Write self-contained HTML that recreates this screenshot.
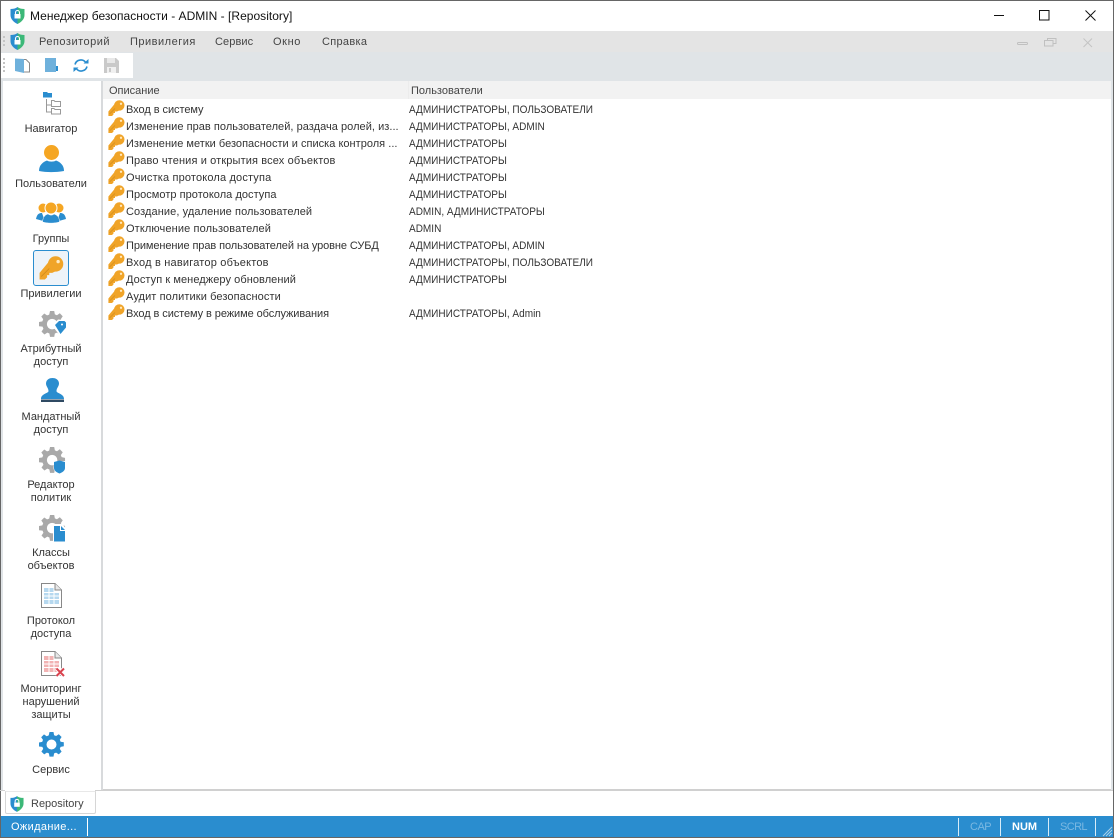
<!DOCTYPE html>
<html><head><meta charset="utf-8"><style>
html,body{margin:0;padding:0;width:1114px;height:838px;overflow:hidden;background:#fff}
body{font-family:"Liberation Sans",sans-serif;font-size:11px;color:#333;position:relative}
.a{position:absolute;white-space:nowrap}
.m{top:36px;color:#444;line-height:13px;letter-spacing:.5px}
.n{left:3px;width:96px;text-align:center;line-height:13px;color:#333;white-space:normal}
.r{left:126px;line-height:14px;color:#333;width:275px;overflow:hidden}
.u{left:409px;line-height:14px;color:#333;transform:scaleX(.912);transform-origin:0 0}
.k{position:absolute;left:108px;width:17px;height:17px}
svg{position:absolute;overflow:visible}
</style></head><body>
<svg width="0" height="0" style="position:absolute"><defs>
<g id="key"><path d="M7 3.500L.4 11.500V16H4L5.500 14.500V13H7V11.500H9L12 10Z" fill="#f0a428"/><circle cx="11.300" cy="5.400" r="5.200" fill="#f0a428"/><circle cx="13" cy="3.800" r="1.150" fill="#ffe9c0"/><path d="M1.500 14L7 8.500" stroke="#d08c1c" stroke-width=".6"/></g>
<path id="gear" d="M10.500 0h4l.6 3.200 2 .8 2.700-1.800 2.800 2.800-1.800 2.700.8 2 3.200.6v4l-3.200.6-.8 2 1.800 2.700-2.800 2.800-2.700-1.800-2 .8-.6 3.200h-4l-.6-3.200-2-.8-2.700 1.800-2.800-2.800 1.800-2.700-.8-2L0 14.500v-4l3.200-.6.8-2L2.200 5.200 5 2.400l2.700 1.800 2-.8zM12.500 7.500a5 5 0 1 0 0 10 5 5 0 0 0 0-10z" fill-rule="evenodd"/>
</defs></svg>

<div class="a" style="left:0;top:0;width:1114px;height:1px;background:#666"></div>
<div class="a" style="left:0;top:0;width:1px;height:838px;background:#666"></div>
<div class="a" style="left:1113px;top:0;width:1px;height:838px;background:#666"></div>

<svg style="left:10px;top:7px" width="15" height="17" viewBox="0 0 15 17"><path d="M7.500 0C5.500 1.500 3 2 .5 2V8C.5 12 3.500 15 7.500 17Z" fill="#2a8dcf"/><path d="M7.500 0C9.500 1.500 12 2 14.500 2V8C14.500 12 11.500 15 7.500 17Z" fill="#3cb878"/><rect x="4.500" y="7" width="6" height="4.500" fill="#fff"/><path d="M5.500 7V5.500a2 2 0 0 1 4 0V7" fill="none" stroke="#fff" stroke-width="1.100"/></svg>
<div class="a" style="left:30px;top:9px;font-size:12px;line-height:15px;color:#111;letter-spacing:.02px">Менеджер безопасности - ADMIN - [Repository]</div>
<svg style="left:994px;top:15px" width="11" height="1"><rect width="10" height="1" fill="#111"/></svg>
<svg style="left:1039px;top:10px" width="11" height="11"><rect x=".5" y=".5" width="9.500" height="9.500" fill="none" stroke="#111"/></svg>
<svg style="left:1085px;top:10px" width="11" height="11"><path d="M.5 .5L10.500 10.500M10.500 .5L.5 10.500" stroke="#111"/></svg>

<div class="a" style="left:1px;top:31px;width:1112px;height:21px;background:#e4e4e4"></div>
<div class="a" style="left:1px;top:52px;width:1112px;height:29px;background:#e0e4e7"></div>
<div class="a" style="left:3px;top:36px;width:2px;height:11px;background:repeating-linear-gradient(#c4c4c4 0 2px,transparent 2px 4px)"></div>
<svg style="left:10px;top:33px" width="15" height="17" viewBox="0 0 15 17"><path d="M7.500 0C5.500 1.500 3 2 .5 2V8C.5 12 3.500 15 7.500 17Z" fill="#2a8dcf"/><path d="M7.500 0C9.500 1.500 12 2 14.500 2V8C14.500 12 11.500 15 7.500 17Z" fill="#3cb878"/><rect x="4.500" y="7" width="6" height="4.500" fill="#fff"/><path d="M5.500 7V5.500a2 2 0 0 1 4 0V7" fill="none" stroke="#fff" stroke-width="1.100"/></svg>
<div class="a m" style="left:39px">Репозиторий</div>
<div class="a m" style="left:130px">Привилегия</div>
<div class="a m" style="left:215px;letter-spacing:.1px">Сервис</div>
<div class="a m" style="left:273px;letter-spacing:.6px">Окно</div>
<div class="a m" style="left:322px;letter-spacing:.3px">Справка</div>
<svg style="left:1017px;top:41px" width="12" height="5"><rect x=".5" y="1.500" width="10" height="2" rx="1" fill="none" stroke="#c0c0c0"/></svg>
<svg style="left:1044px;top:38px" width="13" height="9"><path d="M3.500 2.500V.5H12V5.500H9M.5 2.500H9V8H.5Z" fill="none" stroke="#c0c0c0"/></svg>
<svg style="left:1083px;top:38px" width="10" height="10"><path d="M.5 .5L9 9M9 .5L.5 9" stroke="#c4c4c4"/></svg>

<div class="a" style="left:1px;top:53px;width:132px;height:25px;background:#fff"></div>
<div class="a" style="left:3px;top:58px;width:2px;height:14px;background:repeating-linear-gradient(#c4c4c4 0 2px,transparent 2px 4px)"></div>
<svg style="left:15px;top:58px" width="15" height="15"><path d="M7 1.500H11L14.500 5V14H7Z" fill="#fff" stroke="#888"/><path d="M0 .5L9 1V15L0 13Z" fill="#6fb1dc"/></svg>
<svg style="left:45px;top:58px" width="13" height="14"><rect width="11" height="14" fill="#6fb1dc"/><path d="M11 8H13V13H11Z" fill="#2a8dcf"/></svg>
<svg style="left:73px;top:58px" width="16" height="15" viewBox="0 0 16 15"><path d="M2 6.500A6 6 0 0 1 13 5M14 8.500A6 6 0 0 1 3 10" fill="none" stroke="#2a8dcf" stroke-width="1.600"/><path d="M10.500 5.500H15.500V1ZM5.500 9.500H.5V14Z" fill="#2a8dcf"/></svg>
<svg style="left:104px;top:58px" width="15" height="15"><path d="M0 0H12L15 3V15H0Z" fill="#c9c9c9"/><rect x="3" y="0" width="8" height="5" fill="#e8e8e8"/><rect x="3" y="9" width="9" height="6" fill="#f0f0f0"/><rect x="5" y="10" width="2" height="4" fill="#c9c9c9"/></svg>

<div class="a" style="left:1px;top:81px;width:2px;height:735px;background:#e0e4e7"></div>
<div class="a" style="left:3px;top:81px;width:98px;height:709px;background:#fff"></div>
<div class="a" style="left:101px;top:81px;width:2px;height:709px;background:#d8dadc"></div>
<div class="a" style="left:1111px;top:81px;width:2px;height:735px;background:#e0e4e7"></div>
<div class="a" style="left:103px;top:81px;width:1008px;height:708px;background:#fff"></div>
<div class="a" style="left:103px;top:81px;width:1008px;height:18px;background:#f2f2f2"></div>
<div class="a" style="left:408px;top:81px;width:1px;height:18px;background:#ececec"></div>
<div class="a" style="left:109px;top:85px;line-height:13px;color:#444">Описание</div>
<div class="a" style="left:411px;top:85px;line-height:13px;color:#444">Пользователи</div>
<div class="a" style="left:103px;top:789px;width:1008px;height:1px;background:#d0d0d0"></div>

<svg class="k" style="top:100px" viewBox="0 0 17 17"><use href="#key"/></svg>
<svg class="k" style="top:117px" viewBox="0 0 17 17"><use href="#key"/></svg>
<svg class="k" style="top:134px" viewBox="0 0 17 17"><use href="#key"/></svg>
<svg class="k" style="top:151px" viewBox="0 0 17 17"><use href="#key"/></svg>
<svg class="k" style="top:168px" viewBox="0 0 17 17"><use href="#key"/></svg>
<svg class="k" style="top:185px" viewBox="0 0 17 17"><use href="#key"/></svg>
<svg class="k" style="top:202px" viewBox="0 0 17 17"><use href="#key"/></svg>
<svg class="k" style="top:219px" viewBox="0 0 17 17"><use href="#key"/></svg>
<svg class="k" style="top:236px" viewBox="0 0 17 17"><use href="#key"/></svg>
<svg class="k" style="top:253px" viewBox="0 0 17 17"><use href="#key"/></svg>
<svg class="k" style="top:270px" viewBox="0 0 17 17"><use href="#key"/></svg>
<svg class="k" style="top:287px" viewBox="0 0 17 17"><use href="#key"/></svg>
<svg class="k" style="top:304px" viewBox="0 0 17 17"><use href="#key"/></svg>

<div class="a r" style="top:103px;letter-spacing:-.05px">Вход в систему</div><div class="a u" style="top:103px">АДМИНИСТРАТОРЫ, ПОЛЬЗОВАТЕЛИ</div>
<div class="a r" style="top:120px;letter-spacing:.04px">Изменение прав пользователей, раздача ролей, из...</div><div class="a u" style="top:120px">АДМИНИСТРАТОРЫ, ADMIN</div>
<div class="a r" style="top:137px;letter-spacing:.02px">Изменение метки безопасности и списка контроля ...</div><div class="a u" style="top:137px">АДМИНИСТРАТОРЫ</div>
<div class="a r" style="top:154px;letter-spacing:.13px">Право чтения и открытия всех объектов</div><div class="a u" style="top:154px">АДМИНИСТРАТОРЫ</div>
<div class="a r" style="top:171px;letter-spacing:.16px">Очистка протокола доступа</div><div class="a u" style="top:171px">АДМИНИСТРАТОРЫ</div>
<div class="a r" style="top:188px;letter-spacing:.04px">Просмотр протокола доступа</div><div class="a u" style="top:188px">АДМИНИСТРАТОРЫ</div>
<div class="a r" style="top:205px;letter-spacing:.09px">Создание, удаление пользователей</div><div class="a u" style="top:205px">ADMIN, АДМИНИСТРАТОРЫ</div>
<div class="a r" style="top:222px;letter-spacing:.12px">Отключение пользователей</div><div class="a u" style="top:222px">ADMIN</div>
<div class="a r" style="top:239px;letter-spacing:-.09px">Применение прав пользователей на уровне СУБД</div><div class="a u" style="top:239px">АДМИНИСТРАТОРЫ, ADMIN</div>
<div class="a r" style="top:256px;letter-spacing:.2px">Вход в навигатор объектов</div><div class="a u" style="top:256px">АДМИНИСТРАТОРЫ, ПОЛЬЗОВАТЕЛИ</div>
<div class="a r" style="top:273px;letter-spacing:.07px">Доступ к менеджеру обновлений</div><div class="a u" style="top:273px">АДМИНИСТРАТОРЫ</div>
<div class="a r" style="top:290px;letter-spacing:.1px">Аудит политики безопасности</div>
<div class="a r" style="top:307px;letter-spacing:-.08px">Вход в систему в режиме обслуживания</div><div class="a u" style="top:307px">АДМИНИСТРАТОРЫ, Admin</div>

<!-- nav icons -->
<svg style="left:42px;top:91px" width="20" height="24" viewBox="0 0 20 24"><path d="M1 1H5L6 2H10V6.500H1Z" fill="#2a8dcf"/><path d="M4.500 8V21H9M4.500 14H9M9.500 9.500H12L13 10.500H18.500V15.500H9.500ZM9.500 17.500H12L13 18.500H18.500V23H9.500Z" fill="none" stroke="#999"/></svg>
<div class="a n" style="top:123px">Навигатор</div>
<svg style="left:39px;top:145px" width="24" height="27" viewBox="0 0 24 27"><circle cx="12.500" cy="7.500" r="7.500" fill="#f5a623"/><path d="M0 26C0 20 4 17 8 15.500 10 17 15 17 17 15.500 21 17 25 20 25 26 16 27.500 8 27.500 0 26Z" fill="#2a8dcf"/></svg>
<div class="a n" style="top:178px">Пользователи</div>
<svg style="left:36px;top:202px" width="30" height="21" viewBox="0 0 30 21"><circle cx="7" cy="6" r="4.500" fill="#f5a623"/><circle cx="23" cy="6" r="4.500" fill="#f5a623"/><path d="M0 17C1 12 3 11 6 11L9 19.500Z M30 17C29 12 27 11 24 11L21 19.500Z" fill="#2a8dcf"/><circle cx="15" cy="6" r="6" fill="#f5a623" stroke="#fff"/><path d="M6.500 20C7 14 10 12.500 12 12 14 13.500 16.500 13.500 18 12 21 13 23.500 15 23.500 20 18 21.500 12 21.500 6.500 20Z" fill="#2a8dcf" stroke="#fff" stroke-width=".5"/></svg>
<div class="a n" style="top:233px">Группы</div>
<div class="a" style="left:33px;top:250px;width:34px;height:34px;background:#edf3f9;border:1px solid #2a8dcf;border-radius:3px"></div>
<svg style="left:39px;top:256px" width="25" height="25" viewBox="0 0 17 17"><use href="#key"/></svg>
<div class="a n" style="top:288px">Привилегии</div>

<svg style="left:39px;top:311px" width="29" height="30" viewBox="0 0 29 30"><use href="#gear" fill="#a9a9a9" transform="scale(1.05)"/><path d="M15 13L19 8.500 26 9 28 11 29.500 19.500 22 26 15 17Z" fill="#fff"/><path d="M16 14.500L20 10.500H25.500L27 12V17L21.500 23.500Z" fill="#2a8dcf" transform="translate(0 -.5)"/><circle cx="23" cy="13.500" r="1" fill="#fff"/></svg>
<div class="a n" style="top:343px">Атрибутный<br>доступ</div>
<svg style="left:40px;top:378px" width="25" height="25" viewBox="0 0 25 25"><path d="M12.500 0C16.500 0 19 2.500 19 5.500 19 8.500 16.500 10 16.500 13 16.500 15.500 24 15.500 24 21H1C1 15.500 8.500 15.500 8.500 13 8.500 10 6 8.500 6 5.500 6 2.500 8.500 0 12.500 0Z" fill="#2a8dcf"/><rect x="1" y="21.500" width="23" height="2.500" fill="#2f4a63"/></svg>
<div class="a n" style="top:411px">Мандатный<br>доступ</div>
<svg style="left:39px;top:447px" width="27" height="27" viewBox="0 0 27 27"><use href="#gear" fill="#a9a9a9" transform="scale(1.05)"/><path d="M15 14H26.500V21C26.500 24 23 26 20.500 27.500 18 26 14.500 24 14.500 21Z" fill="#fff"/><path d="M20.500 13.500L26 15V21C26 24 23 25.500 20.500 26.500 18 25.500 15 24 15 21V15Z" fill="#2a8dcf"/></svg>
<div class="a n" style="top:479px">Редактор<br>политик</div>
<svg style="left:39px;top:515px" width="27" height="27" viewBox="0 0 27 27"><use href="#gear" fill="#a9a9a9" transform="scale(1.05)"/><path d="M14 9H23L27.500 14V27H14Z" fill="#fff"/><path d="M15 11H21V16H26V26.500H15ZM22 11L26 15H22Z" fill="#2a8dcf"/></svg>
<div class="a n" style="top:547px">Классы<br>объектов</div>
<svg style="left:41px;top:583px" width="21" height="25" viewBox="0 0 21 25"><path d="M.5 .5H14L20.500 7V24.500H.5Z" fill="#fff" stroke="#888"/><path d="M14 .5V7H20.500" fill="#e8e8e8" stroke="#888"/><path d="M3 5H13V9H18V21H3Z" fill="#b6d8ef"/><path d="M3 9.500H18M3 13H18M3 16.500H18M8 5V21M13 5V21" stroke="#fff"/></svg>
<div class="a n" style="top:615px">Протокол<br>доступа</div>
<svg style="left:41px;top:651px" width="25" height="27" viewBox="0 0 25 27"><path d="M.5 .5H14L20.500 7V24.500H.5Z" fill="#fff" stroke="#888"/><path d="M14 .5V7H20.500" fill="#e8e8e8" stroke="#888"/><path d="M3 5H13V9H18V21H3Z" fill="#f2b3b3"/><path d="M3 9.500H18M3 13H18M3 16.500H18M8 5V21M13 5V21" stroke="#fff"/><path d="M15.500 17.500L23 25M23 17.500L15.500 25" stroke="#fff" stroke-width="4"/><path d="M15.500 17.500L23 25M23 17.500L15.500 25" stroke="#d9434e" stroke-width="2"/></svg>
<div class="a n" style="top:683px">Мониторинг<br>нарушений<br>защиты</div>
<svg style="left:39px;top:732px" width="25" height="25" viewBox="0 0 25 25"><use href="#gear" fill="#2a8dcf"/></svg>
<div class="a n" style="top:764px">Сервис</div>

<div class="a" style="left:1px;top:790px;width:1112px;height:26px;background:#fff"></div>
<div class="a" style="left:5px;top:791px;width:89px;height:21px;background:#fff;border:1px solid #d6d6d6;border-top:1px solid #e8e8e8;border-radius:0 0 2px 2px"></div>
<div class="a" style="left:0;top:790px;width:5px;height:1px;background:#d0d0d0"></div>
<div class="a" style="left:95px;top:790px;width:1018px;height:1px;background:#d0d0d0"></div>
<svg style="left:10px;top:796px" width="14" height="16" viewBox="0 0 15 17"><path d="M7.500 0C5.500 1.500 3 2 .5 2V8C.5 12 3.500 15 7.500 17Z" fill="#2a8dcf"/><path d="M7.500 0C9.500 1.500 12 2 14.500 2V8C14.500 12 11.500 15 7.500 17Z" fill="#3cb878"/><rect x="4.500" y="7" width="6" height="4.500" fill="#fff"/><path d="M5.500 7V5.500a2 2 0 0 1 4 0V7" fill="none" stroke="#fff" stroke-width="1.100"/></svg>
<div class="a" style="left:31px;top:798px;line-height:13px;color:#444">Repository</div>

<div class="a" style="left:1px;top:816px;width:1112px;height:21px;background:#2a8dcf"></div>
<div class="a" style="left:0;top:837px;width:1114px;height:1px;background:#666"></div>
<div class="a" style="left:11px;top:821px;line-height:13px;color:#fff;letter-spacing:.35px">Ожидание...</div>
<div class="a" style="left:87px;top:818px;width:1px;height:18px;background:#fff"></div>
<div class="a" style="left:958px;top:818px;width:1px;height:18px;background:#d8ecf8"></div>
<div class="a" style="left:1000px;top:818px;width:1px;height:18px;background:#d8ecf8"></div>
<div class="a" style="left:1048px;top:818px;width:1px;height:18px;background:#d8ecf8"></div>
<div class="a" style="left:1095px;top:818px;width:1px;height:18px;background:#d8ecf8"></div>
<div class="a" style="left:970px;top:821px;line-height:13px;color:#7ab8e2;letter-spacing:-.5px">CAP</div>
<div class="a" style="left:1012px;top:821px;line-height:13px;color:#fff;font-weight:bold">NUM</div>
<div class="a" style="left:1060px;top:821px;line-height:13px;color:#7ab8e2;letter-spacing:-.6px">SCRL</div>
<svg style="left:1102px;top:826px" width="11" height="11"><path d="M10 1L1 10M10 4L4 10M10 7L7 10" stroke="#a8d0ea"/></svg>
</body></html>
